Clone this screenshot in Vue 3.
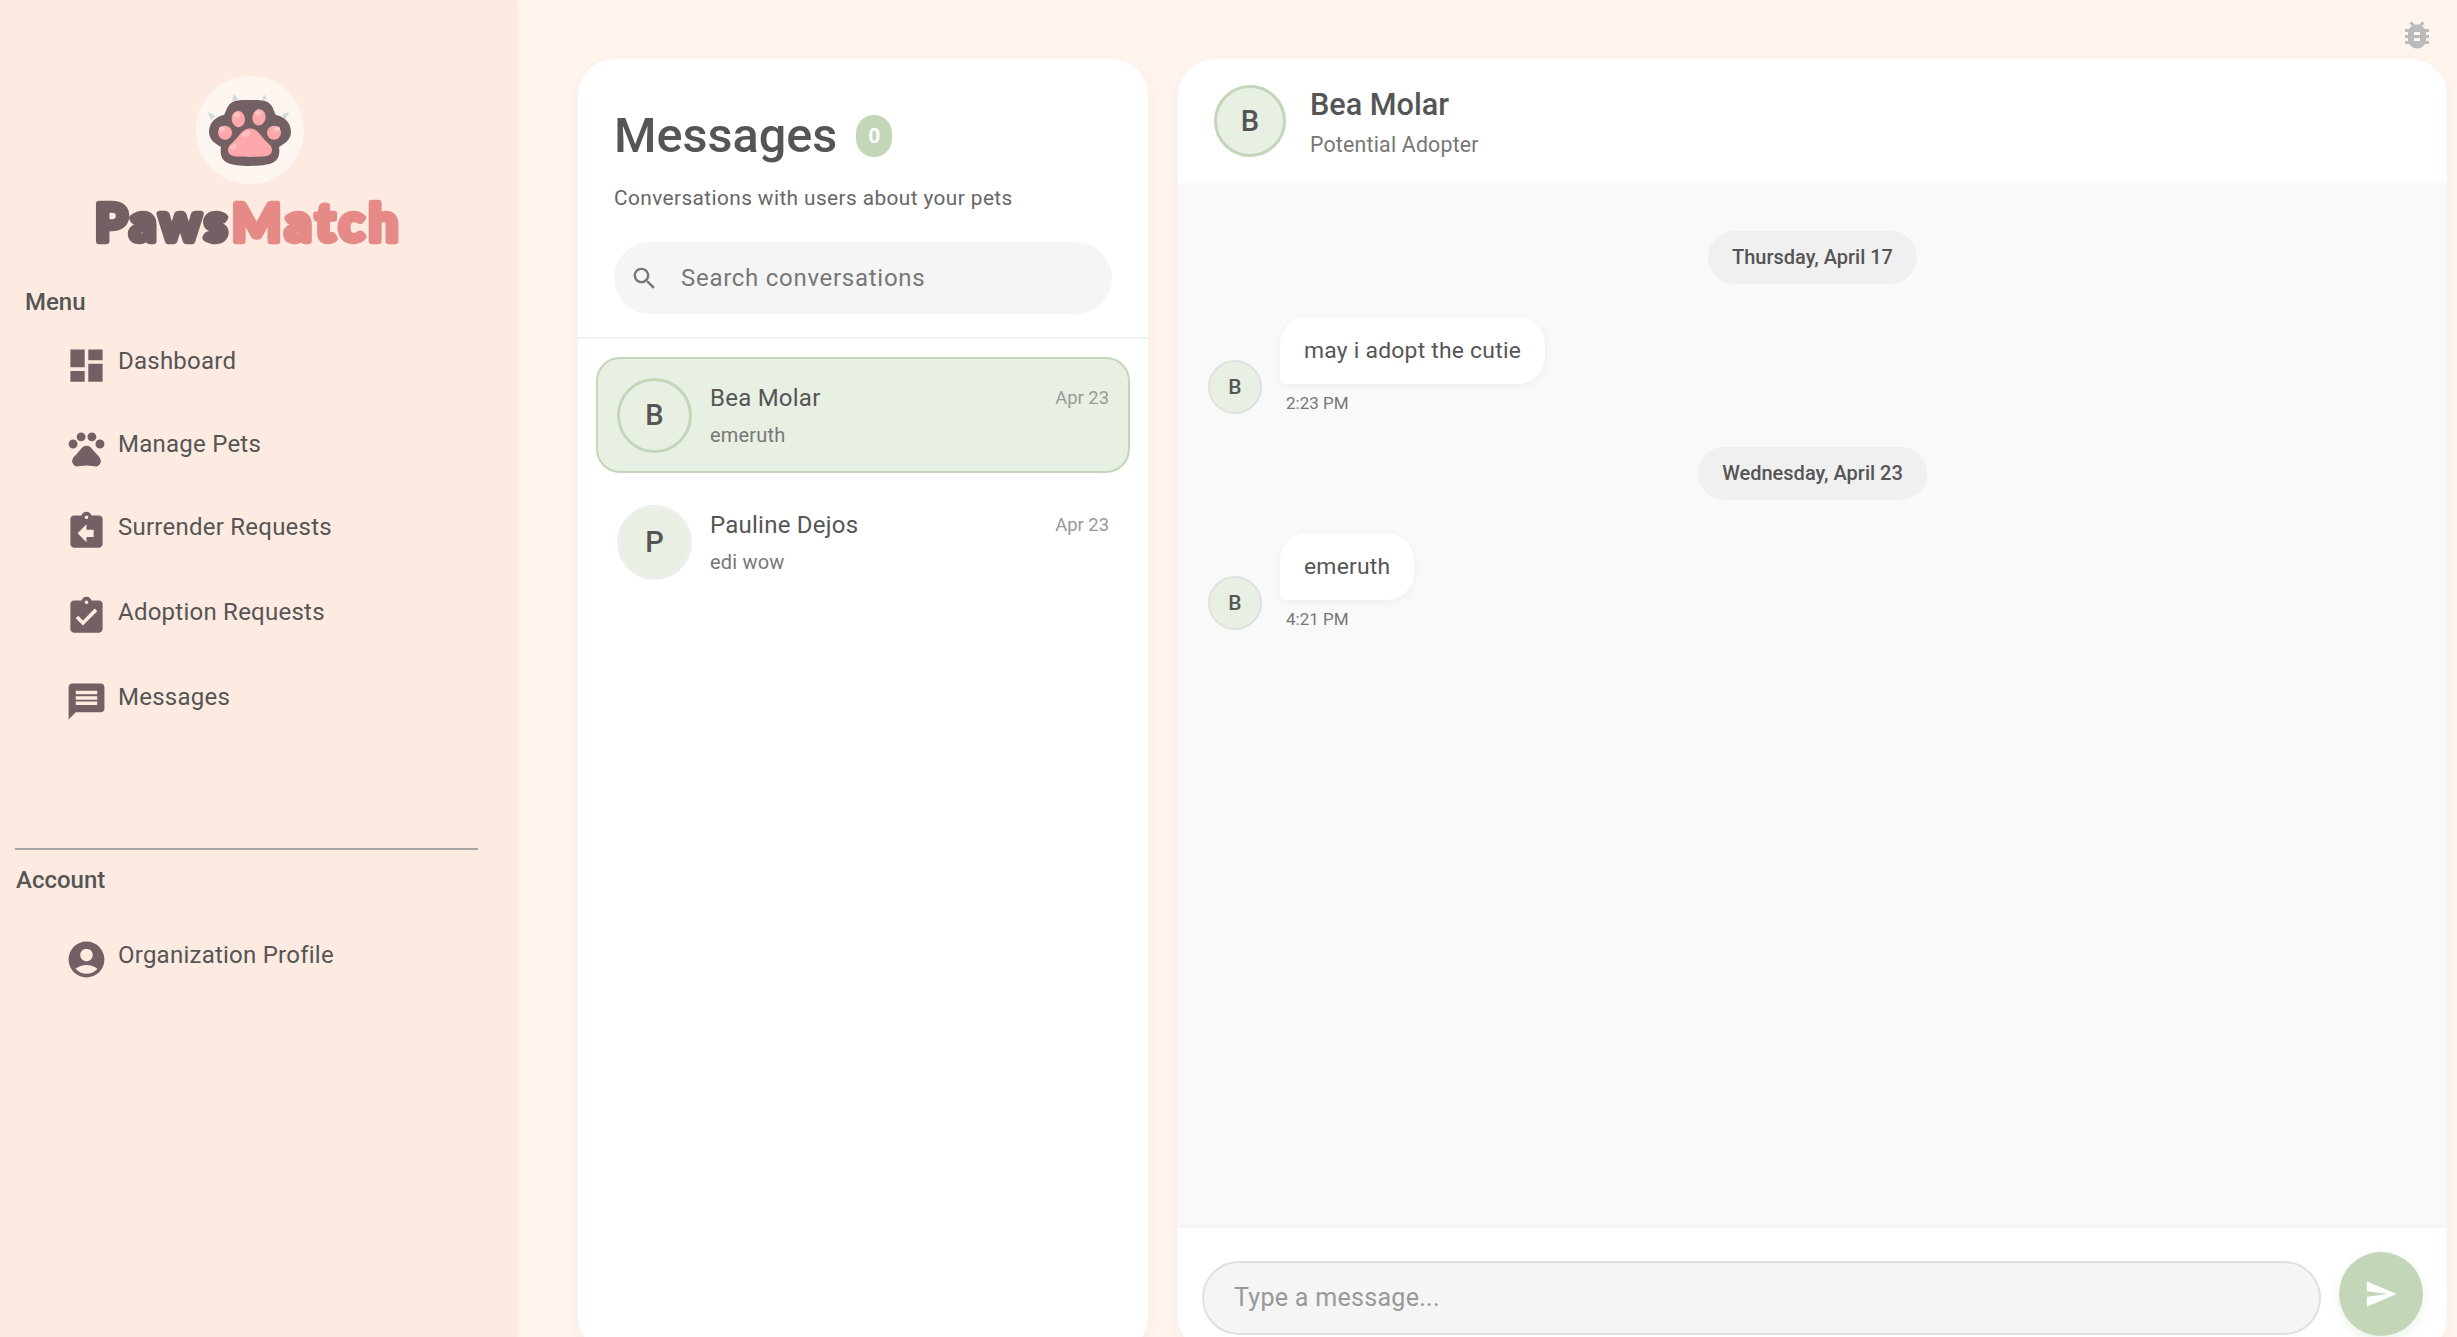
<script setup>
const navItems = [
  { label: 'Dashboard', d: 'M3 13h8V3H3v10zm0 8h8v-6H3v6zm10 0h8V11h-8v10zm0-18v6h8V3h-8z' },
  { label: 'Manage Pets', d: 'M4.5 7a2.5 2.5 0 1 0 0 5 2.5 2.5 0 1 0 0-5zM9 3a2.5 2.5 0 1 0 0 5 2.5 2.5 0 1 0 0-5zM15 3a2.5 2.5 0 1 0 0 5 2.5 2.5 0 1 0 0-5zM19.5 7a2.5 2.5 0 1 0 0 5 2.5 2.5 0 1 0 0-5zM17.34 14.86c-.87-1.02-1.6-1.89-2.48-2.91-.46-.54-1.05-1.08-1.75-1.32-.11-.04-.22-.07-.33-.09-.25-.04-.52-.04-.78-.04s-.53 0-.79.05c-.11.02-.22.05-.33.09-.7.24-1.28.78-1.75 1.32-.87 1.02-1.6 1.89-2.48 2.91-1.31 1.31-2.92 2.76-2.62 4.79.29 1.02 1.02 2.03 2.33 2.32.73.15 3.06-.44 5.54-.44h.18c2.48 0 4.81.58 5.54.44 1.31-.29 2.04-1.31 2.33-2.32.31-2.04-1.3-3.49-2.61-4.8z' },
  { label: 'Surrender Requests', d: 'M19 3h-4.18C14.4 1.84 13.3 1 12 1c-1.3 0-2.4.84-2.82 2H5c-1.1 0-2 .9-2 2v14c0 1.1.9 2 2 2h14c1.1 0 2-.9 2-2V5c0-1.1-.9-2-2-2zm-7 0c.55 0 1 .45 1 1s-.45 1-1 1-1-.45-1-1 .45-1 1-1zm4 12h-4v3l-5-5 5-5v3h4v4z' },
  { label: 'Adoption Requests', d: 'M19 3h-4.18C14.4 1.84 13.3 1 12 1c-1.3 0-2.4.84-2.82 2H5c-1.1 0-2 .9-2 2v14c0 1.1.9 2 2 2h14c1.1 0 2-.9 2-2V5c0-1.1-.9-2-2-2zm-7 0c.55 0 1 .45 1 1s-.45 1-1 1-1-.45-1-1 .45-1 1-1zm-2 14l-4-4 1.41-1.41L10 14.17l6.59-6.59L18 9l-8 8z' },
  { label: 'Messages', d: 'M20 2H4c-1.1 0-1.99.9-1.99 2L2 22l4-4h14c1.1 0 2-.9 2-2V4c0-1.1-.9-2-2-2zm-2 12H6v-2h12v2zm0-3H6V9h12v2zm0-3H6V6h12v2z' }
]
const profileIcon = 'M12 2C6.48 2 2 6.48 2 12s4.48 10 10 10 10-4.48 10-10S17.52 2 12 2zm0 4c1.93 0 3.5 1.57 3.5 3.5S13.93 13 12 13s-3.5-1.57-3.5-3.5S10.07 6 12 6zm0 14c-2.03 0-4.43-.82-6.14-2.88C7.55 15.8 9.68 15 12 15s4.45.8 6.14 2.12C16.43 19.18 14.03 20 12 20z'

const conversations = [
  { initial: 'B', name: 'Bea Molar', date: 'Apr 23', preview: 'emeruth', active: true },
  { initial: 'P', name: 'Pauline Dejos', date: 'Apr 23', preview: 'edi wow', active: false }
]

const thread = [
  { day: 'Thursday, April 17', text: 'may i adopt the cutie', time: '2:23 PM' },
  { day: 'Wednesday, April 23', text: 'emeruth', time: '4:21 PM' }
]
</script>

<template>
  <div class="page">
    <aside class="sidebar">
      <div class="logo-circle">
        <svg viewBox="0 0 108 108" width="108" height="108">
          <path d="M36 25l2-7 4 5zM66 24l2-6 3 5zM15 44l-3-8 7 4zM89 44l4-8-7 3z" fill="#cbd9e0" />
          <path d="M54 24C62 24 70 23 75 29C78 33 78 36 80 39C86 40 95 45 95 56C95 64 88 68 83 71C84 77 83 83 78 86C73 89 64 90 54 90C44 90 35 89 30 86C25 83 24 77 25 71C20 68 13 64 13 56C13 45 22 40 28 39C30 36 30 33 33 29C38 23 46 24 54 24Z" fill="#736064" />
          <ellipse cx="42.3" cy="43" rx="6.6" ry="8.2" transform="rotate(-8 42.3 43)" fill="#ffa8ab" />
          <ellipse cx="63" cy="41.3" rx="6.6" ry="8.2" transform="rotate(8 63 41.3)" fill="#ffa8ab" />
          <ellipse cx="29" cy="56.7" rx="7" ry="7" fill="#ffa8ab" />
          <ellipse cx="78" cy="56.7" rx="7" ry="7" fill="#ffa8ab" />
          <path d="M54 52.5C60 52.5 63 57 67 62C71 67 76 69 76 74C76 79 71 80.5 66 80.5C60 81 48 81 42 80.5C37 80.5 32 79 32 74C32 69 37 67 41 62C45 57 48 52.5 54 52.5Z" fill="#ffa8ab" />
          <ellipse cx="41" cy="39" rx="3" ry="2.6" fill="#ffc4c5" />
          <ellipse cx="62" cy="37" rx="3" ry="2.6" fill="#ffc4c5" />
          <ellipse cx="26" cy="53" rx="3" ry="2.4" fill="#ffc4c5" />
          <ellipse cx="81" cy="53" rx="3" ry="2.4" fill="#ffc4c5" />
          <ellipse cx="50" cy="58" rx="5" ry="3" transform="rotate(-25 50 58)" fill="#ffc0c1" />
          <ellipse cx="37.5" cy="71" rx="3.6" ry="2.4" transform="rotate(-35 37.5 71)" fill="#ffc0c1" />
        </svg>
      </div>
      <svg class="wordmark" viewBox="0 0 320 56" width="320" height="56">
        <text x="4" y="45" textLength="132" lengthAdjust="spacing" class="wm wm-dark">Paws</text>
        <text x="141" y="45" textLength="166" lengthAdjust="spacing" class="wm wm-pink">Match</text>
      </svg>

      <div class="menu-label">Menu</div>
      <nav class="nav">
        <a v-for="item in navItems" :key="item.label" class="nav-item">
          <svg class="nav-icon" viewBox="0 0 24 24"><path :d="item.d" /></svg>
          <span>{{ item.label }}</span>
        </a>
      </nav>

      <div class="divider"></div>
      <div class="account-label">Account</div>
      <a class="nav-item profile">
        <svg class="nav-icon" viewBox="0 0 24 24"><path :d="profileIcon" /></svg>
        <span>Organization Profile</span>
      </a>
    </aside>

    <main class="main">
      <svg class="bug" viewBox="0 0 24 24"><path d="M20 8h-2.81c-.45-.78-1.07-1.45-1.82-1.96L17 4.41 15.59 3l-2.17 2.17C12.96 5.06 12.49 5 12 5c-.49 0-.96.06-1.41.17L8.41 3 7 4.41l1.62 1.63C7.88 6.55 7.26 7.22 6.81 8H4v2h2.09c-.05.33-.09.66-.09 1v1H4v2h2v1c0 .34.04.67.09 1H4v2h2.81c1.04 1.79 2.97 3 5.19 3s4.15-1.21 5.19-3H20v-2h-2.09c.05-.33.09-.66.09-1v-1h2v-2h-2v-1c0-.34-.04-.67-.09-1H20V8zm-6 8h-4v-2h4v2zm0-4h-4v-2h4v2z" /></svg>

      <section class="panel list-panel">
        <header class="list-head">
          <div class="title-row">
            <h1>Messages</h1>
            <span class="count">0</span>
          </div>
          <p class="subtitle">Conversations with users about your pets</p>
          <div class="search">
            <svg class="search-icon" viewBox="0 0 24 24"><path d="M15.5 14h-.79l-.28-.27C15.41 12.59 16 11.11 16 9.5 16 5.91 13.09 3 9.5 3S3 5.91 3 9.5 5.91 16 9.5 16c1.61 0 3.09-.59 4.23-1.57l.27.28v.79l5 4.99L20.49 19l-4.99-5zm-6 0C7.01 14 5 11.99 5 9.5S7.01 5 9.5 5 14 7.01 14 9.5 11.99 14 9.5 14z" /></svg>
            <span class="search-text">Search conversations</span>
          </div>
        </header>
        <div class="conv-list">
          <div v-for="c in conversations" :key="c.name" class="conv" :class="{ active: c.active }">
            <div class="conv-avatar">{{ c.initial }}</div>
            <div class="conv-body">
              <div class="conv-top">
                <span class="conv-name">{{ c.name }}</span>
                <span class="conv-date">{{ c.date }}</span>
              </div>
              <div class="conv-preview">{{ c.preview }}</div>
            </div>
          </div>
        </div>
      </section>

      <section class="panel chat-panel">
        <header class="chat-head">
          <div class="chat-avatar">B</div>
          <div class="chat-who">
            <div class="chat-name">Bea Molar</div>
            <div class="chat-role">Potential Adopter</div>
          </div>
        </header>
        <div class="chat-body">
          <template v-for="m in thread" :key="m.day">
            <div class="day-chip">{{ m.day }}</div>
            <div class="msg">
              <div class="msg-avatar">B</div>
              <div>
                <div class="bubble">{{ m.text }}</div>
                <div class="msg-time">{{ m.time }}</div>
              </div>
            </div>
          </template>
        </div>
        <footer class="composer">
          <div class="input">Type a message...</div>
          <button class="send">
            <svg viewBox="0 0 24 24"><path d="M2.01 21L23 12 2.01 3 2 10l15 2-15 2z" /></svg>
          </button>
        </footer>
      </section>
    </main>
  </div>
</template>

<style>
html, body {
  margin: 0;
  overflow: hidden;
}
</style>

<style scoped>
.page {
  display: flex;
  width: 2457px;
  height: 1337px;
  overflow: hidden;
  background: #fff4ee;
  font-family: Roboto, "Liberation Sans", sans-serif;
  color: #555;
}

.sidebar {
  flex: 0 0 517px;
  box-sizing: border-box;
  padding-top: 76px;
  background: #fdebe2;
  box-shadow: 1px 0 3px rgba(0, 0, 0, 0.04);
}
.logo-circle {
  width: 108px;
  height: 108px;
  margin-left: 196px;
  border-radius: 50%;
  background: #fdf5f0;
}
.logo-circle svg,
.wordmark {
  display: block;
}
.wordmark {
  margin: 12px 0 0 91px;
  overflow: visible;
}
.wm {
  font-family: Lato, Roboto, sans-serif;
  font-size: 52px;
  font-weight: 700;
  stroke-width: 6.5px;
  stroke-linejoin: round;
  stroke-linecap: round;
}
.wm-dark {
  fill: #736064;
  stroke: #736064;
}
.wm-pink {
  fill: #e58a86;
  stroke: #e58a86;
}
.menu-label {
  margin: 36px 0 0 25px;
  font-size: 24px;
  line-height: 28px;
  font-weight: 500;
}
.nav {
  display: flex;
  flex-direction: column;
  margin-top: 28px;
}
.nav-item {
  display: flex;
  align-items: flex-start;
  padding-left: 65px;
  font-size: 24px;
  letter-spacing: 0.01em;
  line-height: 28px;
  color: #555;
}
.nav-item + .nav-item {
  margin-top: 40px;
}
.nav-item:nth-child(3) {
  margin-top: 39.5px;
}
.nav-item:nth-child(4) {
  margin-top: 42px;
}
.nav-item:nth-child(5) {
  margin-top: 42px;
}
.nav-item span {
  margin: 3px 0 0 10px;
}
.nav-icon {
  display: block;
  flex: none;
  width: 43px;
  height: 43px;
  fill: #736064;
}
.divider {
  width: 463px;
  height: 2px;
  margin: 125px 0 0 15px;
  background: #a8a4a2;
}
.account-label {
  margin: 16px 0 0 16px;
  font-size: 24px;
  line-height: 28px;
  font-weight: 500;
}
.profile {
  margin-top: 44px;
}

.main {
  position: relative;
  flex: 1;
  display: flex;
  gap: 30px;
  box-sizing: border-box;
  height: 1353px;
  padding: 59px 10px 0 61px;
}
.bug {
  position: absolute;
  top: 17px;
  right: 22px;
  width: 36px;
  height: 36px;
  fill: #bbb;
}
.panel {
  height: 1294px;
  background: #fff;
  border-radius: 36px;
  box-shadow: 0 4px 20px rgba(0, 0, 0, 0.04);
  overflow: hidden;
}

.list-panel {
  flex: 0 0 570px;
}
.list-head {
  height: 280px;
  box-sizing: border-box;
  padding: 55px 36px 0 36px;
  border-bottom: 2px solid #f0f0f0;
}
.title-row {
  display: flex;
  align-items: center;
  gap: 19px;
  height: 43px;
}
h1 {
  margin: 0;
  font-size: 48.6px;
  font-weight: 500;
  line-height: 43px;
}
.count {
  width: 36px;
  height: 42px;
  border-radius: 18px;
  background: #c3d6b8;
  color: #fff;
  font-size: 21px;
  font-weight: 700;
  line-height: 42px;
  text-align: center;
}
.subtitle {
  margin: 29px 0 0;
  font-size: 20.8px;
  line-height: 24px;
  letter-spacing: 0.02em;
  color: #666;
}
.search {
  display: flex;
  align-items: center;
  height: 72px;
  margin-top: 32px;
  padding-left: 16px;
  border-radius: 36px;
  background: #f5f5f5;
}
.search-icon {
  width: 29px;
  height: 29px;
  fill: #777;
}
.search-text {
  margin-left: 22px;
  font-size: 24px;
  letter-spacing: 0.03em;
  color: #777;
}
.conv-list {
  display: flex;
  flex-direction: column;
  gap: 11px;
  padding: 18px 18px 0;
}
.conv {
  display: flex;
  align-items: center;
  gap: 18px;
  height: 116px;
  box-sizing: border-box;
  padding: 0 19px;
  border: 2px solid transparent;
  border-radius: 24px;
}
.conv.active {
  background: #e8f0e4;
  border-color: #c3d6b8;
}
.conv-avatar {
  flex: none;
  box-sizing: border-box;
  width: 75px;
  height: 75px;
  border-radius: 50%;
  border: 3px solid #eeeeee;
  background: #e8f0e4;
  font-size: 29px;
  font-weight: 500;
  line-height: 69px;
  text-align: center;
}
.conv.active .conv-avatar {
  border-color: #c3d6b8;
}
.conv-body {
  flex: 1;
  min-width: 0;
}
.conv-top {
  display: flex;
  justify-content: space-between;
}
.conv-name {
  font-size: 24px;
  line-height: 28px;
  letter-spacing: 0.01em;
}
.conv-date {
  font-size: 18.4px;
  line-height: 28px;
  color: #999;
}
.conv-preview {
  margin-top: 11px;
  font-size: 20px;
  line-height: 24px;
  letter-spacing: 0.01em;
  color: #777;
}

.chat-panel {
  flex: 1;
  display: flex;
  flex-direction: column;
}
.chat-head {
  display: flex;
  align-items: center;
  gap: 24px;
  flex: 0 0 124px;
  box-sizing: border-box;
  padding-left: 36px;
}
.chat-who {
  padding-top: 3px;
}
.chat-avatar {
  box-sizing: border-box;
  width: 72px;
  height: 72px;
  border-radius: 50%;
  border: 3px solid #c3d6b8;
  background: #e8f0e4;
  font-size: 29px;
  font-weight: 500;
  line-height: 66px;
  text-align: center;
}
.chat-name {
  font-size: 30.6px;
  font-weight: 500;
  line-height: 34px;
}
.chat-role {
  margin-top: 10px;
  font-size: 21.3px;
  line-height: 26px;
  letter-spacing: 0.01em;
  color: #777;
}
.chat-body {
  flex: 1;
  display: flex;
  flex-direction: column;
  gap: 33px;
  box-sizing: border-box;
  padding: 48px 30px 0;
  background: #f9f9f9;
}
.day-chip {
  align-self: center;
  padding: 0 24px;
  height: 53px;
  border-radius: 27px;
  background: #f0f0f0;
  font-size: 20px;
  font-weight: 500;
  line-height: 53px;
}
.msg {
  display: flex;
  align-items: flex-end;
  gap: 18px;
}
.msg-avatar {
  flex: none;
  box-sizing: border-box;
  width: 54px;
  height: 54px;
  border-radius: 50%;
  border: 2px solid #e0e0e0;
  background: #e8f0e4;
  font-size: 21px;
  font-weight: 500;
  line-height: 50px;
  text-align: center;
}
.bubble {
  display: inline-block;
  height: 67px;
  box-sizing: border-box;
  padding: 0 24px;
  border-radius: 27px 27px 27px 6px;
  background: #fff;
  box-shadow: 0 2px 8px rgba(0, 0, 0, 0.05);
  font-size: 22.9px;
  line-height: 67px;
  letter-spacing: 0.01em;
}
.msg-time {
  margin-top: 8px;
  padding-left: 6px;
  font-size: 17px;
  line-height: 22px;
  color: #777;
}
.composer {
  display: flex;
  gap: 18px;
  flex: 0 0 125px;
  box-sizing: border-box;
  padding: 24px 24px 17px;
  background: #fff;
  box-shadow: 0 -2px 8px rgba(0, 0, 0, 0.03);
  position: relative;
}
.input {
  flex: 1;
  box-sizing: border-box;
  height: 74px;
  margin-top: 9px;
  padding-left: 30px;
  border: 2px solid #e0e0e0;
  border-radius: 37px;
  background: #f5f5f5;
  font-size: 25.1px;
  line-height: 70px;
  letter-spacing: 0.01em;
  color: #999;
}
.send {
  flex: none;
  display: flex;
  align-items: center;
  justify-content: center;
  width: 84px;
  height: 84px;
  padding: 0;
  border: 0;
  border-radius: 50%;
  background: #c3d6b8;
  box-shadow: 0 4px 12px rgba(195, 214, 184, 0.3);
}
.send svg {
  width: 34px;
  height: 34px;
  fill: #fff;
}
</style>
